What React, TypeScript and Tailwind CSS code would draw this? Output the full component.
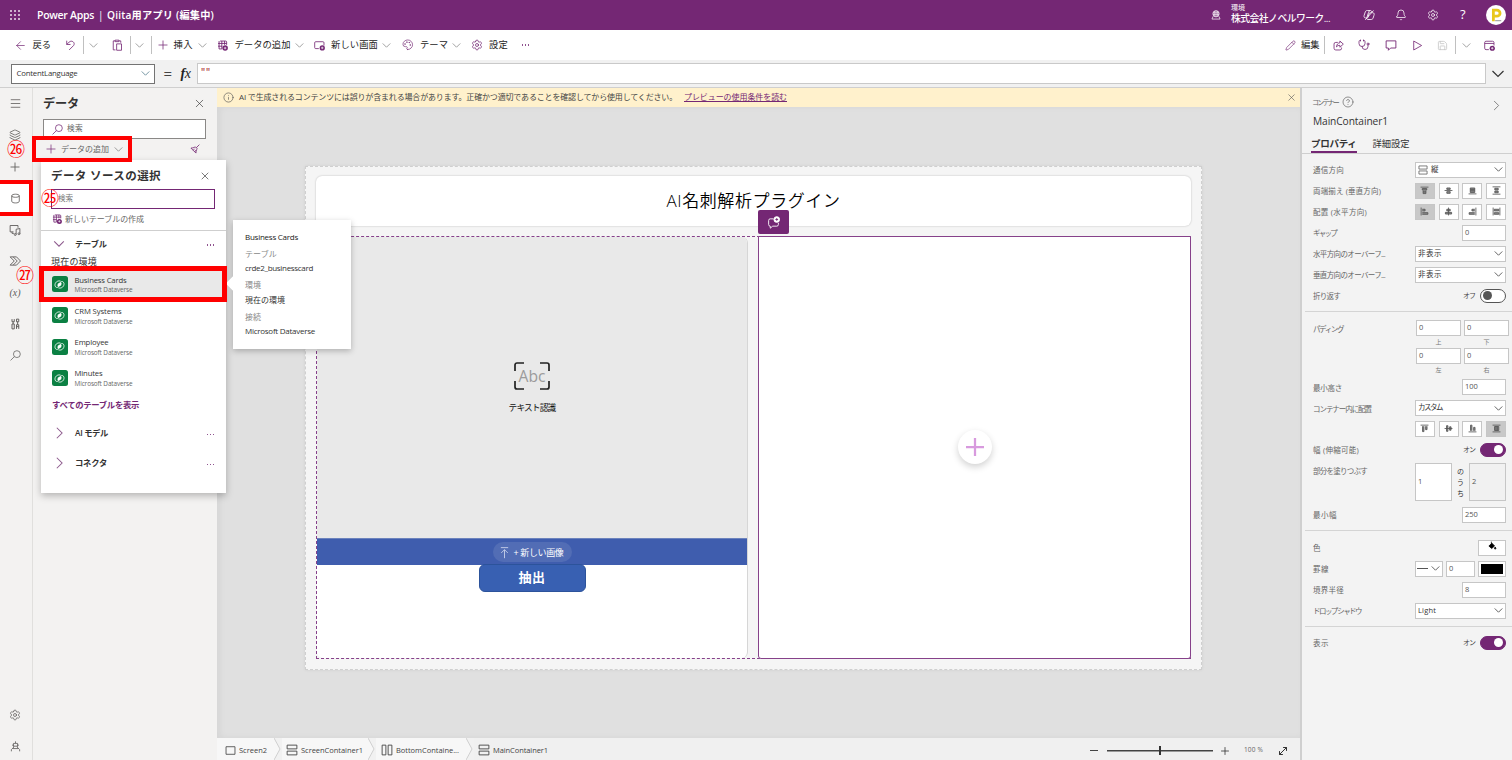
import { useLayoutEffect, useRef, type ReactNode } from 'react';
import {
  ArrowLeft, Bell, ChevronRight, CircleHelp, Info, Layers, Menu, MoveDiagonal, Palette, Pencil, Plus, Save, Settings,
  Stethoscope, X,
} from 'lucide-react';

/* Text set to a fixed advance width: the tracking is worked out from the natural width. */
function Fit({ w, className = '', children }: { w: number; className?: string; children: string }) {
  const ref = useRef<HTMLSpanElement>(null);
  useLayoutEffect(() => {
    const el = ref.current;
    if (!el) return;
    el.style.letterSpacing = '0px';
    const n = el.getBoundingClientRect().width;
    el.style.letterSpacing = `${(w - n) / children.length}px`;
  }, [w, children]);
  return (
    <span ref={ref} className={`inline-block shrink-0 whitespace-pre leading-none ${className}`}>
      {children}
    </span>
  );
}

function Svg({ w, h = w, vb = '0 0 16 16', sw = 1, className = '', children }: {
  w: number; h?: number; vb?: string; sw?: number; className?: string; children: ReactNode;
}) {
  return (
    <svg width={w} height={h} viewBox={vb} fill="none" stroke="currentColor" strokeWidth={sw} className={`shrink-0 ${className}`}>
      {children}
    </svg>
  );
}

const TableAdd = ({ s = 11 }: { s?: number }) => (
  <Svg w={s} sw={1.3}>
    <path d="M4.500 1.500H12.500A1.500 1.500 0 0 1 14 3V7M1.500 5H14M1.500 9H7.500M3 13H7M3 1.500V13M7 1.500V13M11 1.500V7" />
    <circle cx="11.800" cy="11.800" r="4" fill="currentColor" stroke="none" />
    <path d="M11.800 10V13.600M10 11.800H13.600" stroke="white" strokeWidth="1" />
  </Svg>
);
const ScreenAdd = ({ s = 11 }: { s?: number }) => (
  <Svg w={s} sw={1.2}>
    <path d="M7 12.500H2.500A1.500 1.500 0 0 1 1 11V4A1.500 1.500 0 0 1 2.500 2.500H13A1.500 1.500 0 0 1 14.500 4V8" />
    <circle cx="12" cy="11.500" r="3.800" fill="currentColor" stroke="none" />
    <path d="M12 9.700V13.300M10.200 11.500H13.800" stroke="white" strokeWidth="1" />
  </Svg>
);
const WindowAdd = () => (
  <Svg w={11} sw={1.2}>
    <path d="M7 14H3A2 2 0 0 1 1 12V3.500A2 2 0 0 1 3 1.800H12.500A2 2 0 0 1 14.500 3.500V8M1 5H14.500" />
    <circle cx="12" cy="12" r="3.800" fill="currentColor" stroke="none" />
    <path d="M12 10.200V13.800M10.200 12H13.800" stroke="white" strokeWidth="1" />
  </Svg>
);
const Loupe = ({ s = 11, className = '' }: { s?: number; className?: string }) => (
  <Svg w={s} sw={1.1} className={className}><circle cx="10" cy="6" r="5" /><path d="M6.300 9.700 .8 15.200" /></Svg>
);
const Gear = ({ s = 12 }: { s?: number }) => <Settings size={s} strokeWidth={1.500} />;
const Chev = ({ s = 12, className = 'text-[#8f8f8f]' }: { s?: number; className?: string }) => (
  <Svg w={s} sw={1.200} className={className}><path d="M2.500 5 8 10.500l5.500-5.500" /></Svg>
);
const Rows = ({ s = 11 }: { s?: number }) => (
  <Svg w={s} sw={1.200}><path d="M1.500 1.500H14.500V6.500H1.500ZM1.500 9.500H14.500V14.500H1.500Z" /></Svg>
);
const Dots = ({ className = '' }: { className?: string }) => (
  <span className={`flex gap-[1.700px] opacity-80 ${className}`}>
    <i className="size-[1.200px] bg-current" /><i className="size-[1.200px] bg-current" /><i className="size-[1.200px] bg-current" />
  </span>
);

const Slot = ({ className, children }: { className: string; children?: ReactNode }) => (
  <div className={`flex shrink-0 items-center ${className}`}>{children}</div>
);
const Bar = () => <i className="h-[18px] w-px bg-[#c0c0c0]" />;

function Header() {
  return (
    <header className="flex h-[30px] shrink-0 items-center bg-[#742774] text-white">
      <Slot className="w-[37px] pl-[10px]">
        <Svg w={10} vb="0 0 10 10">
          {[1, 5, 9].map((y) => [1, 5, 9].map((x) => <rect key={`${x}-${y}`} x={x - 0.8} y={y - 0.8} width="1.600" height="1.600" fill="white" stroke="none" />))}
        </Svg>
      </Slot>
      <Slot className="w-[61px]"><Fit w={57} className="text-[10.500px] font-semibold">Power Apps</Fit></Slot>
      <Slot className="w-[9px] text-[10px]">|</Slot>
      <Slot className="w-[1104px]"><Fit w={107} className="text-[10.200px] font-semibold">Qiita用アプリ (編集中)</Fit></Slot>
      <Slot className="w-[20px]">
        <Svg w={10} sw={1.100}>
          <circle cx="8" cy="6" r="5" /><path d="M3 4.500H13M3 7.500H13M8 1V11M6 1.500C4.800 5 4.800 8 6 10.500M10 1.500C11.200 5 11.200 8 10 10.500M3.500 10 1.500 14.500H14.500L12.500 10" />
        </Svg>
      </Slot>
      <div className="flex w-[132px] shrink-0 flex-col gap-[3px] pb-[2px]">
        <Fit w={14} className="self-start text-[7px]">環境</Fit>
        <Fit w={99} className="self-start text-[9.800px] font-medium">株式会社ノベルワーク...</Fit>
      </div>
      <Slot className="w-[32px]">
        <Svg w={12} sw={1.100}>
          <path d="M5 12H3.500C1.500 12 1 10 1.500 8.500L3 4C3.500 2.500 4.500 2 6 2H10C11 2 11.500 3 12 4.500L12.500 5H13C15 5 15.200 7 14.600 8.500L13.500 12C13 13.500 12 14 10.500 14H6.500C5.500 14 5 13 5 12L7 5.500C7.500 4 8 2.500 9.500 2.200M11.500 5H9.500C8.500 5 8.300 5.500 8 6.500L6.500 11.500M3 14.500 14 2" />
        </Svg>
      </Slot>
      <Slot className="w-[32px]"><Bell size={12} strokeWidth={1.500} /></Slot>
      <Slot className="w-[33px]"><Gear s={12} /></Slot>
      <Slot className="w-[26px] pb-[1px]"><span className="text-[13px] leading-none">?</span></Slot>
      <div className="flex size-[20px] items-center justify-center rounded-full bg-white">
        <Svg w={14} sw={3.200} className="text-[#e9c81c]"><path d="M5 15V2.500H9A3.500 3.300 0 0 1 9 9.300H5" /><path d="M7 14.500H14" stroke="#999" strokeWidth="1.200" /></Svg>
      </div>
    </header>
  );
}

function Toolbar() {
  const t = 'text-[9.300px] text-[#242424]';
  return (
    <div className="flex h-[30px] shrink-0 items-center bg-white pl-[14px] text-[#742774]">
      <Slot className="w-[18.500px]"><ArrowLeft size={13} strokeWidth={1.300} /></Slot>
      <Slot className="w-[32px]"><Fit w={18.500} className={t}>戻る</Fit></Slot>
      <Slot className="w-[18px]"><Svg w={11} sw={1.200}><path d="M2.500 1V6.500H8M2.500 6.500 6 3C10-.5 15.500 4 12.500 8L6 14.500" /></Svg></Slot>
      <Slot className="w-[5px]"><Bar /></Slot>
      <Slot className="w-[23px]"><Chev s={11} /></Slot>
      <Slot className="w-[19px]"><Svg w={12} sw={1.100}><path d="M6 14.500H3V2.500H5.500M10.500 2.500H13V5M5.500 1.500H10.500V3.500H5.500ZM7.500 6.500H14V15H7.500Z" /></Svg></Slot>
      <Slot className="w-[4px]"><Bar /></Slot>
      <Slot className="w-[17px]"><Chev s={11} /></Slot>
      <Slot className="w-[5px]"><Bar /></Slot>
      <Slot className="w-[18px]"><Plus size={14} strokeWidth={1.300} /></Slot>
      <Slot className="w-[23px]"><Fit w={19.500} className={t}>挿入</Fit></Slot>
      <Slot className="w-[20px]"><Chev s={11} /></Slot>
      <Slot className="w-[18px]"><TableAdd /></Slot>
      <Slot className="w-[59px]"><Fit w={56} className={t}>データの追加</Fit></Slot>
      <Slot className="w-[20px]"><Chev s={11} /></Slot>
      <Slot className="w-[17.500px]"><ScreenAdd /></Slot>
      <Slot className="w-[50px]"><Fit w={47} className={t}>新しい画面</Fit></Slot>
      <Slot className="w-[21px]"><Chev s={11} /></Slot>
      <Slot className="w-[18px]"><Palette size={11.500} strokeWidth={1.400} className="-scale-x-100" /></Slot>
      <Slot className="w-[31px]"><Fit w={28} className={t}>テーマ</Fit></Slot>
      <Slot className="w-[20px]"><Chev s={11} /></Slot>
      <Slot className="w-[18px]"><Gear s={12} /></Slot>
      <Slot className="w-[33px]"><Fit w={19} className={t}>設定</Fit></Slot>
      <Slot className="flex-1"><Dots /></Slot>
      <Slot className="w-[16px]"><Pencil size={11} strokeWidth={1.400} /></Slot>
      <Slot className="w-[23px]"><Fit w={18.500} className={t}>編集</Fit></Slot>
      <Slot className="w-[9px]"><Bar /></Slot>
      <Slot className="w-[25px]"><Svg w={11} sw={1.200}><path d="M7 3.500H4A2.500 2.500 0 0 0 1.500 6V12A2.500 2.500 0 0 0 4 14.500H10A2.500 2.500 0 0 0 12.500 12V11M10 1.500V4C7 4.500 5.500 6.500 5 10 6.500 8.300 8 7.800 10 7.800V10.500L15 6Z" /></Svg></Slot>
      <Slot className="w-[27px]"><Stethoscope size={12} strokeWidth={1.600} /></Slot>
      <Slot className="w-[27px]"><Svg w={12} sw={1.200}><path d="M1.500 2.500H14.500V12H7.500L4.500 15V12H1.500Z" /></Svg></Slot>
      <Slot className="w-[25px]"><Svg w={11} sw={1.200}><path d="M2.500 1.500 14 8 2.500 14.500Z" /></Svg></Slot>
      <Slot className="w-[18px] text-[#c4c4c4]"><Save size={11} strokeWidth={1.700} /></Slot>
      <Slot className="w-[6px]"><Bar /></Slot>
      <Slot className="w-[23px]"><Chev s={11} /></Slot>
      <Slot className="w-[28px]"><WindowAdd /></Slot>
    </div>
  );
}

function FormulaBar() {
  return (
    <div className="flex h-[28px] shrink-0 items-center border-b border-[#cfcfcf] bg-[#f1f1f1] pl-[10.500px]">
      <div className="flex h-[20px] w-[144px] items-center justify-between border border-[#737373] bg-white pl-[5px] pr-[3px]">
        <Fit w={61} className="text-[7.800px] text-[#333]">ContentLanguage</Fit>
        <Chev s={11} className="text-[#5b8292]" />
      </div>
      <span className="w-[26px] pl-[9px] text-[15px] leading-none text-[#444]">=</span>
      <span className="w-[16px] font-['Liberation_Serif',serif] text-[14px] italic leading-none tracking-[-0.500px] text-[#222]"><b>f</b>x</span>
      <div className="h-[21px] w-[1289px] border border-[#c9c9c9] bg-white pl-[3px] pt-[4px] font-['Liberation_Mono',monospace] text-[8.500px] leading-[10px] text-[#a31515]">""</div>
      <div className="flex flex-1 justify-center pr-[1px]"><Chev s={16} className="text-[#333]" /></div>
    </div>
  );
}

function Rail() {
  const c = 'h-[31.500px] w-[30px] justify-center';
  return (
    <nav className="flex w-[33px] shrink-0 flex-col border-r border-[#e0dfdd] bg-[#f3f2f1] text-[#605e5c]">
      <Slot className={c}><Menu size={13} strokeWidth={1.500} /></Slot>
      <Slot className={c}><Layers size={12} strokeWidth={1.600} /></Slot>
      <Slot className={c}><Plus size={14} strokeWidth={1.500} /></Slot>
      <Slot className={`${c} bg-white`}>
        <Svg w={11} sw={1.200}><path d="M2.500 4V12C2.500 15.300 13.500 15.300 13.500 12V4M2.500 4C2.500 1 13.500 1 13.500 4S2.500 7 2.500 4" /></Svg>
      </Slot>
      <Slot className={c}>
        <Svg w={12} sw={1.200}><path d="M6 10.500H1.500V2H12V5M4 10.500V12.500H6.500M9.500 14V7L14.500 6V13" /><circle cx="8.300" cy="14" r="1.300" /><circle cx="13.300" cy="13" r="1.300" /></Svg>
      </Slot>
      <Slot className={c}>
        <Svg w={12} sw={1.200}><path d="M1.500 2.500H10L15.300 8 10 13.500H1.500L7 8ZM5.500 2.500 11 8 5.500 13.500" /></Svg>
      </Slot>
      <Slot className={c}><span className="font-['Liberation_Serif',serif] text-[10px] italic leading-none">(x)</span></Slot>
      <Slot className={c}>
        <Svg w={12} sw={1.300}><path d="M4 1.500V5H7V1.500M5.500 5V8M4 8H7V14.500H4ZM10 1.500H13V5H10ZM11.500 5V9M10 14.500V9H13V14.500M10 11.500H13" /></Svg>
      </Slot>
      <Slot className={c}><Loupe s={11} /></Slot>
      <div className="flex-1" />
      <Slot className={c}><Gear s={12} /></Slot>
      <Slot className="h-[29px] w-[30px] justify-center pt-[2px]">
        <Svg w={11} sw={1.200}><path d="M8 .5V3M5 7.500V3.500H11V7.500ZM3 6H5M11 6H13M5.500 7.500 4.500 11H11.500L10.500 7.500M4.500 10 2 12.500V15M11.500 10 14 12.500V15" /></Svg>
      </Slot>
    </nav>
  );
}

function DataPanel() {
  return (
    <aside className="flex w-[184px] shrink-0 flex-col bg-[#f3f2f1] pl-[10px] pr-[11px] text-[#333]">
      <div className="flex h-[31px] items-center justify-between pt-[1px]">
        <Fit w={36} className="text-[12.200px] font-bold">データ</Fit>
        <X size={13} strokeWidth={1.200} className="mb-[1px]" />
      </div>
      <div className="flex h-[20px] items-center gap-[4px] border border-[#8a8886] bg-white pl-[8px] text-[#742774]">
        <Loupe s={11} />
        <Fit w={16} className="text-[7.700px] text-[#666]">検索</Fit>
      </div>
      <div className="flex h-[20px] items-center pl-[1px] text-[#742774]">
        <Plus size={14} strokeWidth={1.200} />
        <Fit w={48} className="ml-[3px] text-[8px] text-[#666]">データの追加</Fit>
        <Chev s={11} className="ml-[4px] text-[#888]" />
        <Svg w={10} sw={1.300} className="ml-auto mr-[6px]"><path d="M15 1 10 6M1.500 6.500C6 6.500 8.500 4.500 8.500 4.500L11.500 7.500C11.500 7.500 9.500 10 9.500 14.500ZM5 10 7.500 7.500M7.500 12.500 9 10" /></Svg>
      </div>
    </aside>
  );
}

const DvIcon = () => (
  <div className="flex size-[16px] shrink-0 items-center justify-center rounded-[2.500px] bg-[#0b8043] text-white">
    <Svg w={11} sw={1.200}>
      <path d="M9.500 3C4.500 1.800 1 5.500 1.500 9.500 2 12.500 4.500 13 6.500 11.500M6.500 13C11.500 14.200 15 10.500 14.500 6.500 14 3.500 11.500 3 9.500 4.500" />
      <path d="M5.500 7 9.500 4.500 11 6 10.500 9 6.500 11.500 5 10Z" fill="white" stroke="none" />
    </Svg>
  </div>
);

const tables: [string, number][] = [['Business Cards', 52], ['CRM Systems', 47], ['Employee', 34], ['Minutes', 28]];

function SourcePicker() {
  return (
    <div className="absolute left-[41px] top-[160px] flex h-[333px] w-[185px] flex-col bg-white text-[#333] shadow-[0_3px_7px_rgba(0,0,0,0.25)]">
      <div className="flex h-[29px] shrink-0 items-center justify-between pl-[10px] pr-[15px] pt-[2px]">
        <Fit w={110} className="text-[11.500px] font-bold">データ ソースの選択</Fit>
        <X size={12} strokeWidth={1.300} />
      </div>
      <div className="ml-[10px] flex h-[20px] w-[164px] shrink-0 items-center border border-[#742774] pl-[6px]">
        <Fit w={15} className="text-[7.500px] text-[#777]">検索</Fit>
      </div>
      <div className="flex h-[22px] shrink-0 items-center gap-[3px] border-b border-[#cfcfcf] pb-[2px] pl-[11px] text-[#742774]">
        <TableAdd s={10} /><Fit w={79} className="text-[8px] text-[#666]">新しいテーブルの作成</Fit>
      </div>
      <div className="flex h-[26px] shrink-0 items-center pl-[11px] pr-[12px] text-[#742774]">
        <Chev s={14} className="text-[#8d5a8d]" />
        <Fit w={32} className="ml-[9px] text-[8.200px] font-semibold text-[#333]">テーブル</Fit>
        <Dots className="ml-auto mt-[2px]" />
      </div>
      <div className="flex h-[12px] shrink-0 items-start pl-[10px]"><Fit w={46} className="text-[9px]">現在の環境</Fit></div>
      {tables.map(([name, w], i) => (
        <div key={name} className={`flex h-[31.300px] shrink-0 items-center gap-[7px] pb-[1px] pl-[10.500px] ${i === 0 ? 'bg-[#e9e9e9]' : ''}`}>
          <DvIcon />
          <div className="flex flex-col items-start gap-[3px] pt-[2px]">
            <Fit w={w} className="text-[7.700px]">{name}</Fit>
            <Fit w={58} className="text-[6.400px] text-[#666]">Microsoft Dataverse</Fit>
          </div>
        </div>
      ))}
      <div className="flex h-[21px] shrink-0 items-center pl-[11px]"><Fit w={87} className="text-[8.300px] font-semibold text-[#742774]">すべてのテーブルを表示</Fit></div>
      {([['AI モデル', 33], ['コネクタ', 32]] as [string, number][]).map(([s, w]) => (
        <div key={s} className="mt-[2px] flex h-[28px] shrink-0 items-center pl-[11px] pr-[12px] pt-[4px] text-[#742774]">
          <Svg w={14} sw={1.200} className="text-[#8d5a8d]"><path d="M5.500 2 11.500 8 5.500 14" /></Svg>
          <Fit w={w} className="ml-[9px] text-[8.300px] font-semibold text-[#333]">{s}</Fit>
          <Dots className="ml-auto mt-[3px]" />
        </div>
      ))}
    </div>
  );
}

function TableCard() {
  const k = 'mt-[9px] text-[8px] text-[#888]';
  const v = 'mt-[6.400px] text-[8px] text-[#333]';
  return (
    <div className="absolute left-[233px] top-[220px] flex h-[129px] w-[118px] flex-col items-start bg-white pl-[12px] pt-[4px] shadow-[0_2px_6px_rgba(0,0,0,0.25)]">
      <i className="absolute -left-[5px] top-[58px] size-[11px] rotate-45 bg-white" />
      <Fit w={53} className="mt-[9px] text-[8px] text-[#222]">Business Cards</Fit>
      <Fit w={32} className={k}>テーブル</Fit>
      <Fit w={68} className={v}>crde2_businesscard</Fit>
      <Fit w={16} className={k}>環境</Fit>
      <Fit w={40} className={v}>現在の環境</Fit>
      <Fit w={16} className={k}>接続</Fit>
      <Fit w={70} className={v}>Microsoft Dataverse</Fit>
    </div>
  );
}

function Artboard() {
  return (
    <div className="relative ml-[88px] mt-[59px] flex h-[504px] w-[897px] shrink-0 flex-col border border-dashed border-[#cfcfcf] bg-[#f5f5f5] px-[10px] pt-[9px] shadow-[0_0_3px_rgba(0,0,0,0.08)]">
      <div className="flex h-[50px] items-center justify-center rounded-[6px] bg-white pb-[2px] shadow-[0_0_2px_rgba(0,0,0,0.25)]">
        <Fit w={174} className="text-[17px] font-[350] text-black">AI名刺解析プラグイン</Fit>
      </div>
      <div className="relative mt-[10px] flex h-[423px] justify-between border border-dashed border-[#86418a]">
        <div className="flex w-[431px] flex-col items-center overflow-hidden rounded-[6px] border-r border-[#d6d6d6] bg-white">
          <div className="flex h-[301px] w-full flex-col items-center bg-[#e9e9e9] pt-[125px]">
            <div className="flex h-[28px] w-[36px] items-center justify-center">
              <Svg w={36} h={28} vb="0 0 36 28" sw={1.700} className="text-[#222]">
                <path d="M1 9V3a2 2 0 0 1 2-2H10M26 1H33a2 2 0 0 1 2 2V9M35 19V25a2 2 0 0 1-2 2H26M10 27H3a2 2 0 0 1-2-2V19" />
                <text x="18" y="19.500" textAnchor="middle" fontSize="15.500" fill="#9b9b9b" stroke="none" textLength="27" lengthAdjust="spacingAndGlyphs">Abc</text>
              </Svg>
            </div>
            <Fit w={47} className="mt-[14px] text-[8.700px] text-[#111]">テキスト認識</Fit>
          </div>
          <div className="flex h-[27px] w-full items-center justify-center border-t border-[#6c83bd] bg-[#3f5dae]">
            <div className="flex h-[20px] w-[79px] items-center rounded-full bg-[#526db5] pl-[5px] text-white">
              <Svg w={13} sw={1} className="text-[#d5dcf0]"><path d="M3.500 2H12.500M8 15V4.500M4 8.500 8 4.500 12 8.500" /></Svg>
              <Fit w={50} className="ml-[3px] text-[9px]">+ 新しい画像</Fit>
            </div>
          </div>
          <div className="-mt-[1px] flex h-[28px] w-[107px] items-center justify-center rounded-[6px] border border-[#2c539b] bg-[#3860b2] pb-[2px]">
            <Fit w={27} className="text-[13px] font-bold text-white">抽出</Fit>
          </div>
        </div>
        <div className="-mb-[1px] -mr-[1px] -mt-[1px] flex w-[433px] items-center justify-center rounded-b-[3px] border border-[#86418a] bg-white">
          <div className="mb-[1px] flex size-[34px] items-center justify-center rounded-full bg-white text-[#d89ade] shadow-[0_3px_7px_rgba(0,0,0,0.18)]">
            <Svg w={18} sw={2}><path d="M0 8H16M8 0V16" /></Svg>
          </div>
        </div>
        <div className="absolute -top-[27px] left-[441px] flex h-[24px] w-[31px] items-center justify-center rounded-[2px] bg-[#742774] text-white">
          <Svg w={13} sw={1.100}><path d="M8 3.500H4A2 2 0 0 0 2 5.500V10.500A2 2 0 0 0 4 12.500V15L7 12.500H12A2 2 0 0 0 14 10.500V8.500" /><circle cx="12" cy="4.300" r="3.500" fill="white" /><path d="M12 2.500V6M10.300 4.300H13.700" stroke="#742774" /></Svg>
        </div>
      </div>
    </div>
  );
}

function Crumb({ icon, w, cls, children, last = false }: { icon: ReactNode; w: number; cls: string; children: string; last?: boolean }) {
  return (
    <div className={`flex shrink-0 items-center gap-[3px] text-[#444] ${cls} ${last ? '' : 'bg-[#f7f7f7]'}`}>
      <span className="pt-[2px]">{icon}</span>
      <Fit w={w} className="mt-[3px] text-[7.500px]">{children}</Fit>
      {!last && (
        <Svg w={8} h={22} vb="0 0 8 22" className="ml-auto text-[#cfcfcf]"><path d="M0 0H8V22H1L6 11Z" fill="#f1f1f1" stroke="none" /><path d="M0 0 6 11 0 22" /></Svg>
      )}
    </div>
  );
}

function Center() {
  return (
    <main className="flex min-w-0 flex-1 flex-col bg-[#e0e0e0]">
      <div className="flex h-[19px] shrink-0 items-center bg-[#fff1cc] pb-[1px] pl-[6px] pr-[3px] text-[#555]">
        <Info size={11} strokeWidth={1.400} />
        <Fit w={438} className="ml-[5px] text-[8px] text-[#444]">AI で生成されるコンテンツには誤りが含まれる場合があります。正確かつ適切であることを確認してから使用してください。</Fit>
        <Fit w={103} className="ml-[7px] text-[8px] text-[#742774] underline underline-offset-1">プレビューの使用条件を読む</Fit>
        <X size={11} strokeWidth={1.300} className="ml-auto" />
      </div>
      <div className="flex-1 overflow-hidden shadow-[inset_3px_0_6px_rgba(0,0,0,0.05)]"><Artboard /></div>
      <div className="flex h-[22px] shrink-0 bg-[#f0f0f0]">
        <Crumb icon={<Svg w={11} sw={1.200}><path d="M1.500 2.500H14.500V13.500H1.500Z" /></Svg>} w={28} cls="w-[65px] pl-[8px]">Screen2</Crumb>
        <Crumb icon={<Rows s={12} />} w={62} cls="w-[94px] pl-[4px]">ScreenContainer1</Crumb>
        <Crumb icon={<Svg w={12} sw={1.200}><path d="M1.500 1.500H6.500V14.500H1.500ZM9.500 1.500H14.500V14.500H9.500Z" /></Svg>} w={63} cls="w-[98px] pl-[5px]">BottomContaine...</Crumb>
        <Crumb icon={<Rows s={12} />} w={55} cls="pl-[4px]" last>MainContainer1</Crumb>
        <div className="ml-auto flex items-center pr-[11px] pt-[3px] text-[#333]">
          <i className="mr-[9px] h-px w-[8px] bg-[#444]" />
          <div className="flex h-[9px] w-[106px] items-center justify-center bg-[linear-gradient(#444,#444)] bg-[length:100%_1.500px] bg-center bg-no-repeat"><i className="h-[9px] w-[2px] bg-[#333]" /></div>
          <Plus size={12} strokeWidth={1.600} className="ml-[6px]" />
          <Fit w={19} className="ml-[13px] text-[6.500px] text-[#666]">100 %</Fit>
          <MoveDiagonal size={12} strokeWidth={2} className="ml-[14px]" />
        </div>
      </div>
    </main>
  );
}

const box = 'flex items-center border border-[#c6c6c6] bg-white text-[#555]';

function Row({ label, w, cls = 'h-[21px]', children }: { label: string; w: number; cls?: string; children?: ReactNode }) {
  return (
    <div className={`flex shrink-0 items-center pl-[12px] pr-[6px] ${cls}`}>
      <Fit w={w} className="mr-auto mt-[3px] text-[7.500px] text-[#666]">{label}</Fit>
      {children}
    </div>
  );
}
const Select = ({ w, icon, children }: { w: number; icon?: ReactNode; children: string }) => (
  <div className={`${box} h-[16px] w-[91px] pl-[2px] pr-[1px]`}>
    {icon}
    <Fit w={w} className={`${icon ? 'ml-[3px]' : ''} text-[7.500px] text-[#333]`}>{children}</Fit>
    <Chev s={11} className="ml-auto text-[#444]" />
  </div>
);
const Num = ({ v, cls = 'w-[44px]' }: { v: string; cls?: string }) => (
  <div className={`${box} h-[16px] pl-[2px] text-[7.500px] leading-none ${cls}`}>{v}</div>
);
const icons: Record<string, ReactNode> = {
  vt: <path d="M1 2H15M4 4.500H12V7H4ZM5.500 8V13.500H10.500V8M5.500 10.500H10.500" />,
  vc: <path d="M5 3.500H11V6H5ZM1 8H15M5 10H11V13H5Z" />,
  vb: <path d="M1 14H15M4 3.500H12V11.500H4ZM4 6H12M4 8.500H12" />,
  vs: <path d="M1 1.500H15M5 4H11V7H5ZM5 9H11V12H5ZM1 14.500H15" />,
  hl: <path d="M2 1V15M4 4H9V7H4M4 10H14V13H4" />,
  hc: <path d="M8 1V15M5 4H11V7H5ZM2.500 9.500H13.500V12.500H2.500Z" />,
  hr: <path d="M14 1V15M12 4H7V7H12M12 10H2V13H12" />,
  hs: <path d="M2 1V15M14 1V15M4 4H12V7H4ZM4 10H12V13H4Z" />,
  at: <path d="M1 2H15M4.500 4V13.500H7V4M10 4V10H12.500V4" />,
  ac: <path d="M1 8H15M4.500 3V13H7V3ZM10 5V11H12.500V5Z" />,
  ab: <path d="M1 14H15M4.500 12V2H7V12M10 12V6H12.500V12" />,
  as: <path d="M1 2H15M1 14H15M4.500 4.500H12V11.500H4.500ZM7 4.500V11.500M9.500 4.500V11.500" />,
};
function Picks({ ids, on }: { ids: string[]; on: number }) {
  return (
    <div className="flex gap-[3.700px]">
      {ids.map((id, i) => (
        <div key={id} className={`flex h-[16px] w-[20px] items-center justify-center border border-[#c6c6c6] pb-[1px] text-[#555] ${i === on ? 'bg-[#c8c8c8]' : 'bg-white'}`}>
          <Svg w={9} sw={1.500} className="fill-[#8a8a8a]">{icons[id]}</Svg>
        </div>
      ))}
    </div>
  );
}
function Toggle({ on }: { on: boolean }) {
  return (
    <>
      <Fit w={12} className="mr-[5px] text-[7px] text-[#444]">{on ? 'オン' : 'オフ'}</Fit>
      <div className={`flex h-[14px] w-[26px] items-center rounded-full border px-[2px] ${on ? 'justify-end border-[#742774] bg-[#742774]' : 'border-[#555] bg-white'}`}>
        <i className={`size-[9px] rounded-full ${on ? 'bg-white' : 'bg-[#555]'}`} />
      </div>
    </>
  );
}
const Rule = () => <i className="ml-[4px] block h-px shrink-0 bg-[#d4d4d4]" />;
const tiny = 'text-center text-[6px] leading-none text-[#777]';

function Properties() {
  return (
    <aside className="flex w-[212px] shrink-0 flex-col border-l-2 border-[#cfcfcf] bg-[#f3f3f3] text-[#333]">
      <div className="flex h-[29px] shrink-0 items-center pl-[10px] pr-[7px] text-[#666]">
        <Fit w={26} className="text-[7px]">コンテナー</Fit>
        <CircleHelp size={12} strokeWidth={1.400} className="-mt-[2px] ml-[4px]" />
        <ChevronRight size={17} strokeWidth={1.100} className="ml-auto mt-[6px]" />
      </div>
      <div className="flex h-[16px] shrink-0 items-start pl-[11px]"><Fit w={75} className="-mt-[1px] text-[10.200px] font-medium">MainContainer1</Fit></div>
      <div className="flex h-[21px] shrink-0 items-end border-b border-[#cfcfcf] pl-[9px]">
        <div className="flex h-[18px] items-center border-b-2 border-[#742774] pt-[1px]"><Fit w={45.500} className="text-[9.500px] font-semibold">プロパティ</Fit></div>
        <div className="flex h-[18px] items-center pb-[1px]"><Fit w={37} className="ml-[16px] text-[9.300px]">詳細設定</Fit></div>
      </div>
      <div className="-ml-px flex flex-col pt-[5px]">
        <Row label="通信方向" w={31}><Select w={9} icon={<Rows s={10} />}>縦</Select></Row>
        <Row label="両端揃え (垂直方向)" w={68}><Picks ids={['vt', 'vc', 'vb', 'vs']} on={0} /></Row>
        <Row label="配置 (水平方向)" w={54}><Picks ids={['hl', 'hc', 'hr', 'hs']} on={0} /></Row>
        <Row label="ギャップ" w={23}><Num v="0" /></Row>
        <Row label="水平方向のオーバーフ..." w={72}><Select w={24}>非表示</Select></Row>
        <Row label="垂直方向のオーバーフ..." w={72}><Select w={24}>非表示</Select></Row>
        <Row label="折り返す" w={27}><Toggle on={false} /></Row>
        <div className="h-[5px]" />
        <Rule />
        <div className="flex h-[65px] shrink-0 pl-[12px] pr-[3px] pt-[8px]">
          <Fit w={30} className="mr-auto mt-[6px] text-[7.500px] text-[#666]">パディング</Fit>
          <div className="grid grid-cols-2 content-start gap-x-[3px]">
            {[['0', '上'], ['0', '下'], ['0', '左'], ['0', '右']].map(([v, l]) => (
              <div key={l} className="h-[27.500px]"><Num v={v} cls="w-[45px]" /><div className={`mt-[3px] ${tiny}`}>{l}</div></div>
            ))}
          </div>
        </div>
        <Row label="最小高さ" w={29} cls="h-[20px]"><Num v="100" /></Row>
        <Row label="コンテナー内に配置" w={58} cls="h-[22px]"><Select w={24}>カスタム</Select></Row>
        <div className="flex h-[20px] items-center justify-end pr-[6px]"><Picks ids={['at', 'ac', 'ab', 'as']} on={3} /></div>
        <Row label="幅 (伸縮可能)" w={46}><Toggle on /></Row>
        <div className="flex h-[44px] items-start pl-[12px] pr-[6px] pt-[3px]">
          <Fit w={54} className="mr-auto mt-[5px] text-[7.500px] text-[#666]">部分を塗りつぶす</Fit>
          <div className={`${box} h-[38px] w-[37px] pl-[2px] text-[7.500px]`}>1</div>
          <div className="flex w-[17px] flex-col items-center gap-[4px] pt-[5px] text-[7px] leading-none"><span>の</span><span>う</span><span>ち</span></div>
          <div className={`${box} h-[38px] w-[37px] !bg-[#f1f1f1] pl-[2px] text-[7.500px]`}>2</div>
        </div>
        <Row label="最小幅" w={24}><Num v="250" /></Row>
        <div className="h-[5px]" />
        <Rule />
        <div className="h-[6px]" />
        <Row label="色" w={8}>
          <div className={`${box} h-[16px] w-[28px] justify-center pb-[3px]`}><Svg w={10} sw={1.200} className="text-black"><path d="M7 1V6" /><path d="M3 8 8 3.500 12 8 7.500 12ZM13 9.500C15 12 14 13 13 13S11.500 12 13 9.500Z" fill="black" /></Svg></div>
        </Row>
        <Row label="罫線" w={16}>
          <div className={`${box} h-[16px] w-[28px] justify-between px-[1px]`}><i className="h-px w-[11px] bg-[#555]" /><Chev s={11} className="text-[#444]" /></div>
          <Num v="0" cls="ml-[3px] w-[29px]" />
          <div className={`${box} ml-[3px] h-[16px] w-[28px] justify-center`}><i className="h-[10px] w-[22px] bg-black" /></div>
        </Row>
        <Row label="境界半径" w={31}><Num v="8" /></Row>
        <Row label="ドロップ シャドウ" w={48}><Select w={18}>Light</Select></Row>
        <div className="h-[5px]" />
        <Rule />
        <div className="h-[5px]" />
        <Row label="表示" w={16}><Toggle on /></Row>
      </div>
    </aside>
  );
}

const mark = "absolute font-['Noto_Sans_CJK_JP',sans-serif] text-[18px] leading-none text-[#f00]";

export default function App() {
  return (
    <div lang="ja" className="relative flex h-[760px] w-[1512px] flex-col overflow-hidden bg-white font-['Open_Sans','Noto_Sans_CJK_JP',sans-serif]">
      <Header />
      <Toolbar />
      <FormulaBar />
      <div className="flex min-h-0 flex-1">
        <Rail />
        <DataPanel />
        <Center />
        <Properties />
      </div>
      <SourcePicker />
      <TableCard />
      <i className="absolute left-[32px] top-[136px] h-[26px] w-[100px] border-4 border-[#f00]" />
      <i className="absolute left-0 top-[180px] h-[36px] w-[33px] border-4 border-l-0 border-[#f00]" />
      <i className="absolute left-[39px] top-[266px] h-[36px] w-[188px] border-[5px] border-[#f00]" />
      <span className={`${mark} left-[41px] top-[188px]`}>㉕</span>
      <span className={`${mark} left-[7px] top-[139px]`}>㉖</span>
      <span className={`${mark} left-[16px] top-[265px]`}>㉗</span>
    </div>
  );
}
